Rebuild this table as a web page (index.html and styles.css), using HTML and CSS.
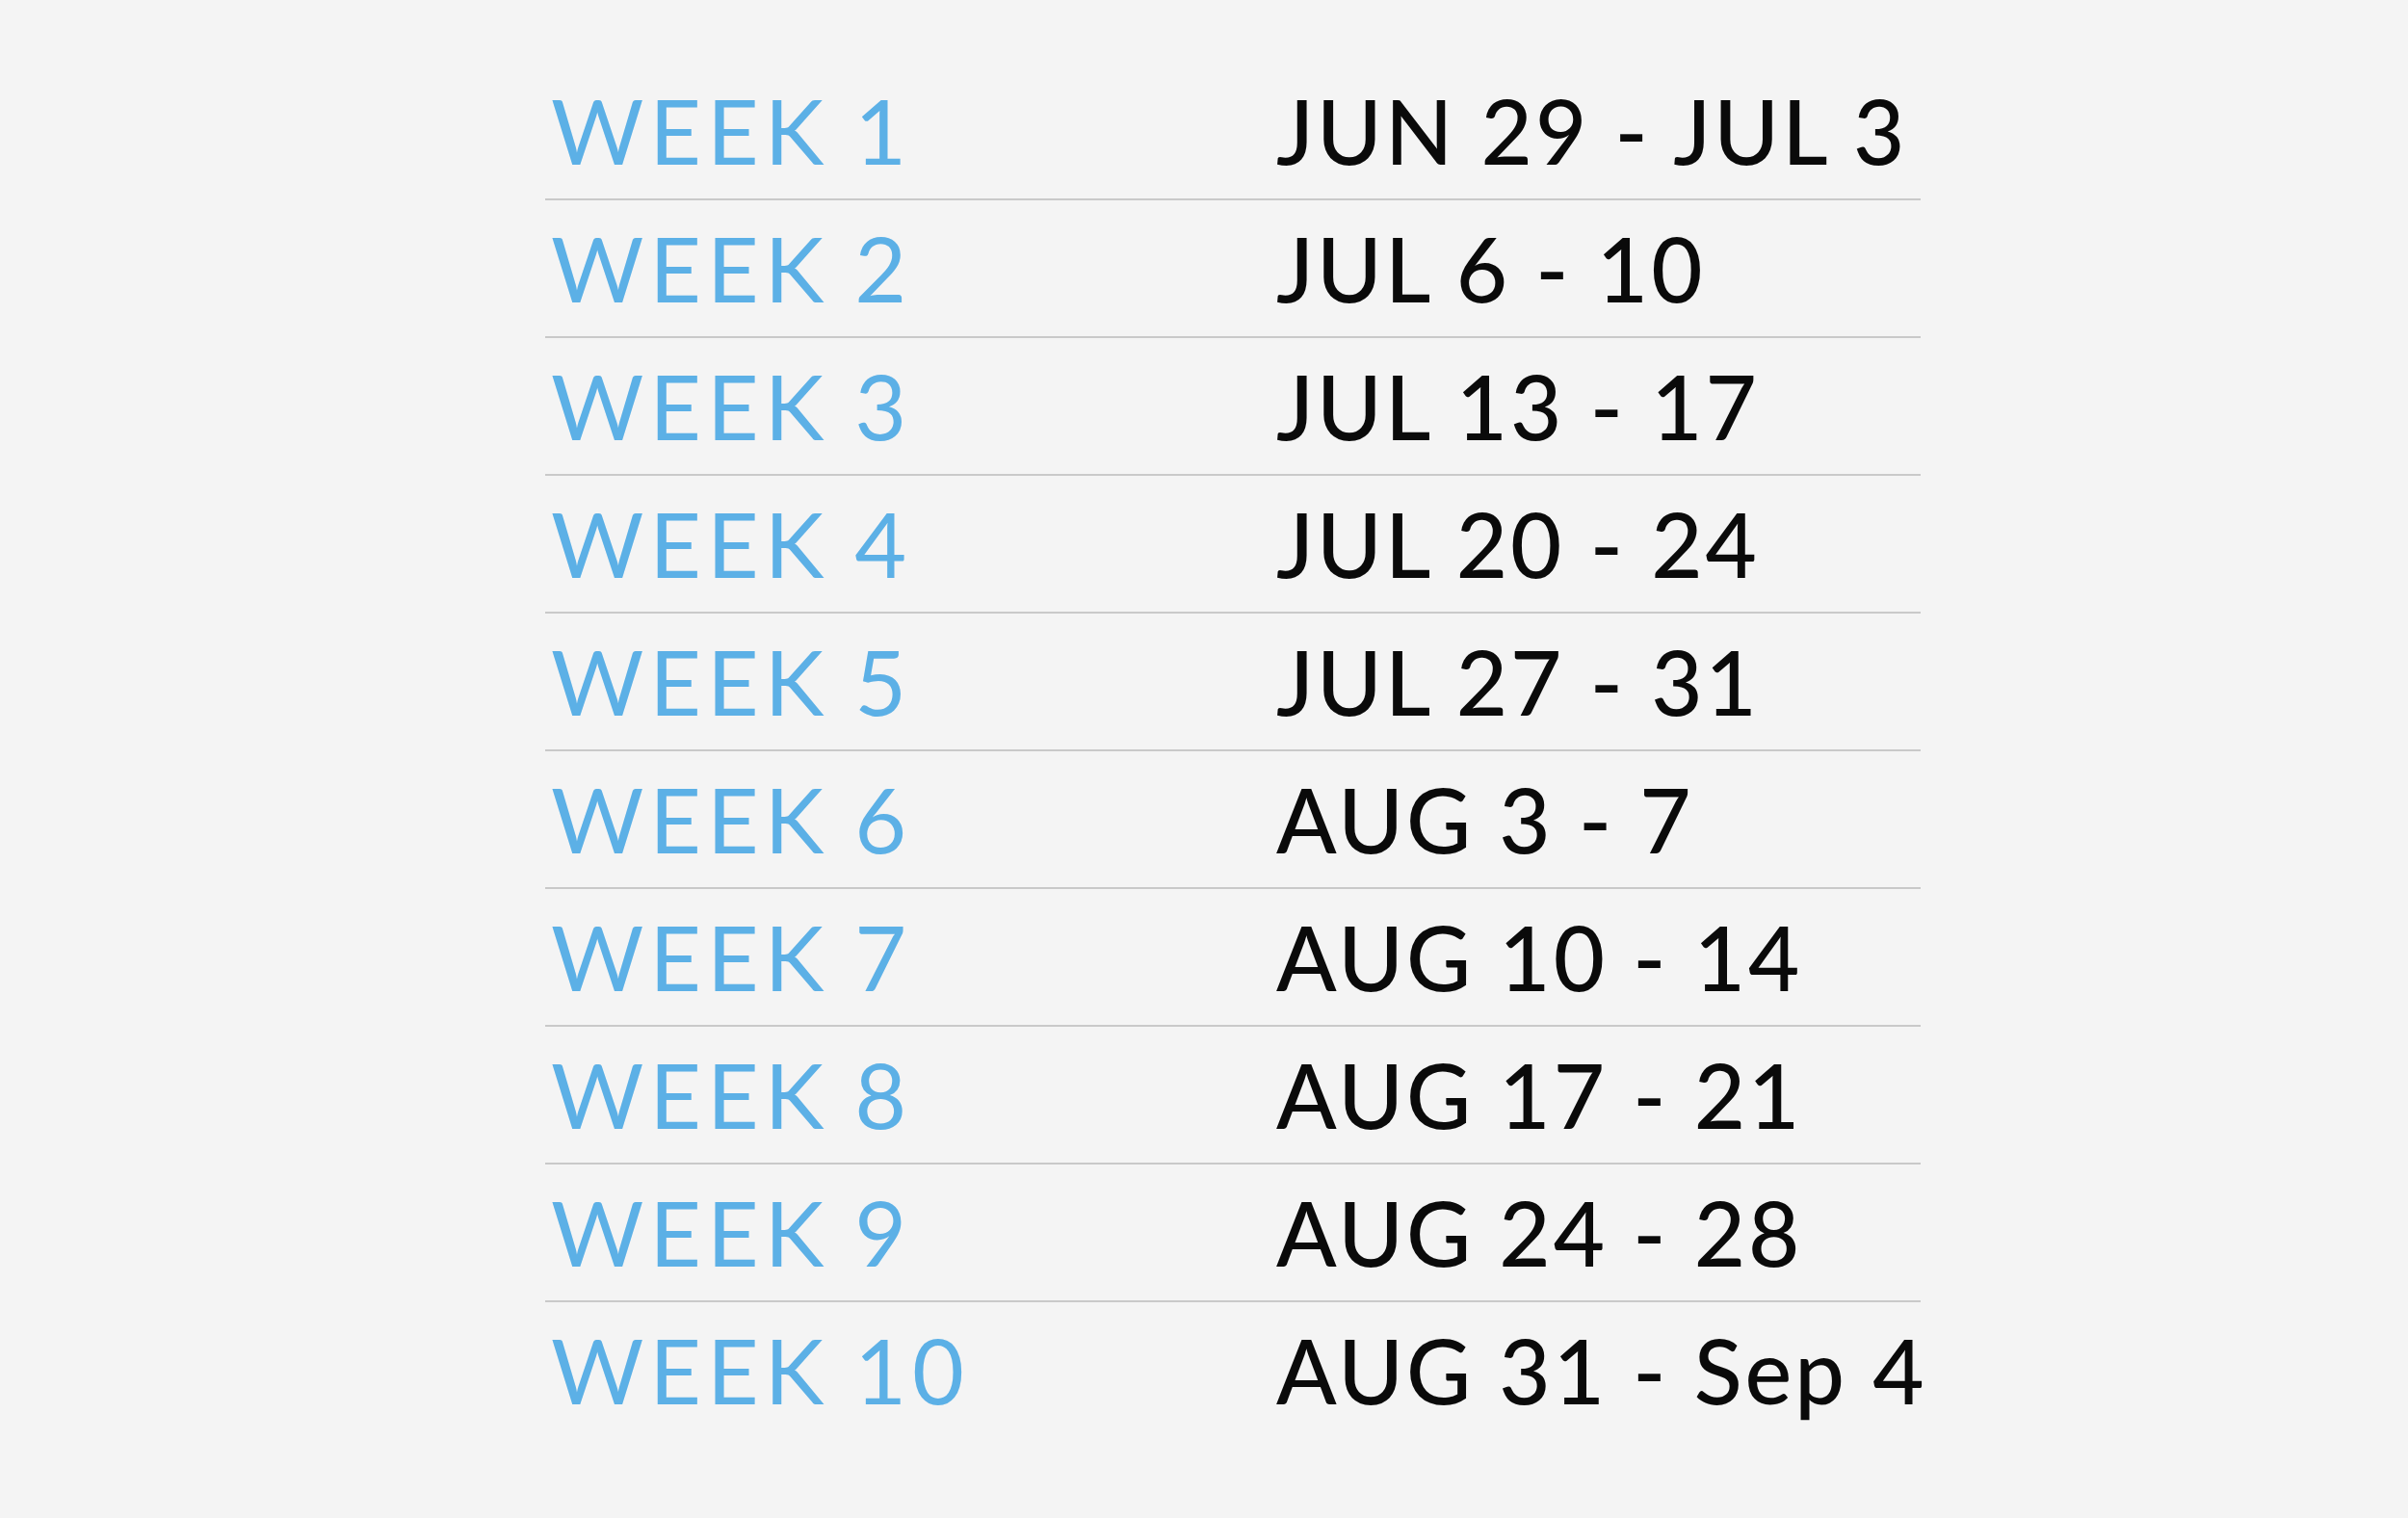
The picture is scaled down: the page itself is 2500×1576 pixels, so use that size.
FILE: index.html
```html
<!DOCTYPE html>
<html>
<head>
<meta charset="utf-8">
<link rel="stylesheet" href="styles.css">
</head>
<body>
<div class="schedule">
  <div class="row"><span class="week">WEEK 1</span><span class="date">JUN 29 - JUL 3</span></div>
  <div class="row"><span class="week">WEEK 2</span><span class="date">JUL 6 - 10</span></div>
  <div class="row"><span class="week">WEEK 3</span><span class="date">JUL 13 - 17</span></div>
  <div class="row"><span class="week">WEEK 4</span><span class="date">JUL 20 - 24</span></div>
  <div class="row"><span class="week">WEEK 5</span><span class="date">JUL 27 - 31</span></div>
  <div class="row"><span class="week">WEEK 6</span><span class="date">AUG 3 - 7</span></div>
  <div class="row"><span class="week">WEEK 7</span><span class="date">AUG 10 - 14</span></div>
  <div class="row"><span class="week">WEEK 8</span><span class="date">AUG 17 - 21</span></div>
  <div class="row"><span class="week">WEEK 9</span><span class="date">AUG 24 - 28</span></div>
  <div class="row last"><span class="week">WEEK 10</span><span class="date">AUG 31 - Sep 4</span></div>
</div>
</body>
</html>
```
FILE: styles.css
```css
html, body {
  margin: 0;
  padding: 0;
  background: #f4f4f4;
  width: 2500px;
  height: 1576px;
  overflow: hidden;
}
.schedule {
  display: flex;
  flex-direction: column;
  margin-left: 566px;
  width: 1428px;
  padding-top: 65px;
}
.row {
  display: flex;
  align-items: flex-end;
  border-bottom: 2px solid #c9c9c9;
  padding-bottom: 24px;
  box-sizing: content-box;
  height: 117px;
}
.row.last {
  border-bottom: none;
}
.week {
  flex: 0 0 753px;
  font-family: Lato, sans-serif;
  font-weight: 400;
  font-size: 93px;
  line-height: 1;
  letter-spacing: 6px;
  word-spacing: -4px;
  color: #5cb0e6;
  padding-left: 6px;
  white-space: nowrap;
}
.date {
  flex: 0 0 auto;
  font-family: Lato, sans-serif;
  font-weight: 500;
  font-size: 92px;
  line-height: 1;
  letter-spacing: 3px;
  color: #0a0a0a;
  white-space: nowrap;
}
```
